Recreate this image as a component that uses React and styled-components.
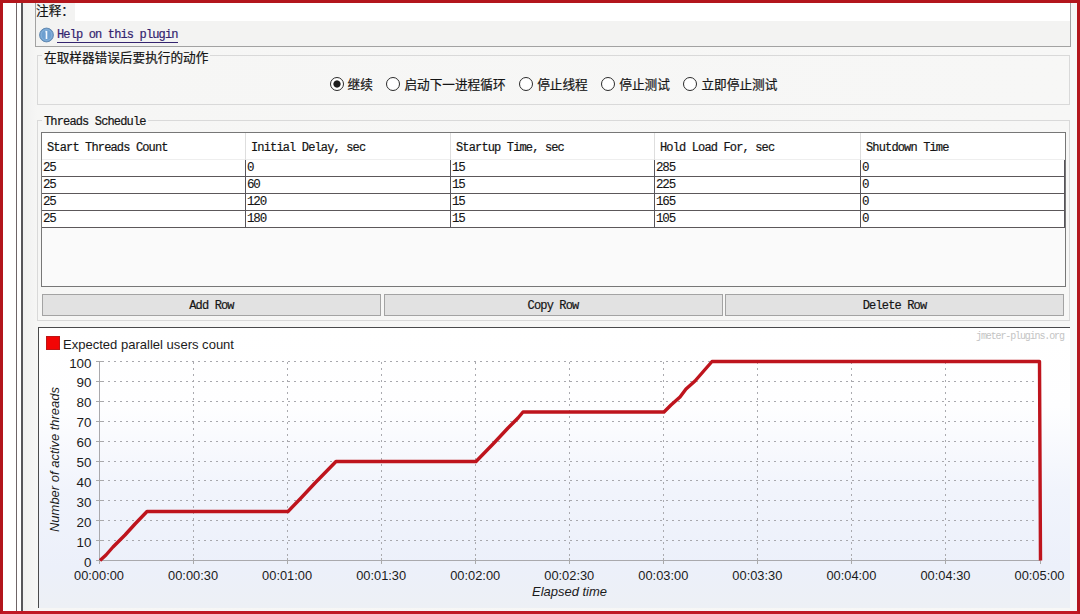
import React from "react";
import styled, { createGlobalStyle, css } from "styled-components";

const Global = createGlobalStyle`
  * { box-sizing: border-box; }
  body { margin: 0; background: #f5f5f5; overflow: hidden; }
`;

const mono = css`
  font-family: "Liberation Mono", "Noto Sans CJK SC", monospace;
  font-size: 12px;
  letter-spacing: -0.85px;
  -webkit-text-stroke: 0.2px currentColor;
  white-space: pre;
`;
const cjk = css`
  font-family: "Noto Sans CJK SC", sans-serif;
  font-size: 12.65px;
  letter-spacing: 0;
  -webkit-text-stroke: 0.2px currentColor;
  white-space: nowrap;
`;

const Frame = styled.div`
  width: 1080px;
  height: 614px;
  border: 3px solid #b3161c;
  border-bottom-color: #c01824;
  display: flex;
  background: #fff;
  color: #151515;
  overflow: hidden;
`;
const Gutter = styled.div`
  width: 15px;
  border-right: 1px solid #6f6567;
  background: #fff;
`;
const Divider = styled.div`
  width: 6px;
  border-right: 2px solid #57565a;
  background: #fff;
`;
const Panel = styled.main`
  flex: 1;
  display: flex;
  flex-direction: column;
  padding: 0 6px 0 12px;
  background: linear-gradient(90deg, #f0f0f0, #f6f6f5 14px, #f7f7f6);
`;
const Header = styled.section`
  height: 44px;
  width: 1036px;
  border: solid #a2a2a2;
  border-width: 0 1px 1px;
  background: #f3f3f2;
`;
const CommentRow = styled.div`
  display: flex;
  height: 18px;
`;
const CommentLabel = styled.label`
  ${cjk}
  width: 39px;
  font-size: 12.65px;
  line-height: 14px;
`;
const CommentField = styled.div`
  flex: 1;
  background: #fff;
`;
const HelpRow = styled.div`
  display: flex;
  align-items: center;
  gap: 3px;
  height: 25px;
  padding: 3px 0 0 3px;
`;
const InfoIcon = styled.svg`
  width: 15px;
  height: 16px;
`;
const HelpLink = styled.a`
  ${mono}
  height: 15px;
  line-height: 15px;
  color: #34246f;
  border-bottom: 1px solid #34246f;
`;
const Group = styled.fieldset`
  margin: ${(p) => p.$top}px 0 0 2px;
  padding: ${(p) => p.$pad || "0"};
  width: 1033px;
  min-width: 0;
  height: ${(p) => p.$h}px;
  border: 1px solid #d9d9d9;
`;
const Legend = styled.legend`
  ${(p) => (p.$cn ? cjk : mono)}
  height: 13px;
  line-height: ${(p) => (p.$cn ? 15 : 17)}px;
  margin-left: ${(p) => (p.$cn ? 4 : 1)}px;
  padding: 0 2px;
`;
const Options = styled.div`
  display: flex;
  justify-content: flex-start;
  gap: 13.6px;
  padding: 12px 0 0 291.5px;
`;
const Option = styled.label`
  ${cjk}
  display: flex;
  align-items: center;
  gap: 4px;
  height: 20px;
  line-height: 20px;
`;
const Radio = styled.span`
  width: 14px;
  height: 14px;
  border: 1px solid #2b2b2b;
  border-radius: 50%;
  background: ${(p) => (p.$on ? "radial-gradient(circle, #1c1c1c 3.2px, #fff 4px)" : "#fff")};
`;
const TableBox = styled.div`
  width: 1025px;
  height: 155px;
  border: 1px solid #777;
  background: #fafafa;
`;
const Row = styled.div`
  display: grid;
  grid-template-columns: 204px 205px 204px 206px 204px;
  background: #fff;
`;
const HeadRow = styled(Row)`
  height: 27px;
  border-bottom: 1px solid #eeeeee;
`;
const HeadCell = styled.div`
  ${mono}
  padding: 1px 0 0 5px;
  line-height: 28px;
  border-right: 1px solid #dedede;
  &:last-child { border-right: 0; }
`;
const DataRow = styled(Row)`
  height: 17px;
  border-bottom: 1px solid #5c585a;
`;
const Cell = styled.div`
  ${mono}
  font-size: 12.5px;
  letter-spacing: -1.15px;
  -webkit-text-stroke: 0.1px currentColor;
  line-height: 17px;
  padding-left: 1px;
  border-right: 1px solid #57545a;
`;
const Buttons = styled.div`
  display: grid;
  grid-template-columns: repeat(3, 339px);
  gap: 2.5px;
  padding: 7px 0 0 1px;
`;
const Button = styled.button`
  ${mono}
  height: 22px;
  padding: 2px 0 0;
  color: #151515;
  border: 1px solid #a3a3a3;
  border-radius: 0;
  background: #e2e2e2;
`;
const ChartBox = styled.section`
  width: 1032px;
  height: 281px;
  margin: 6px 0 0 3px;
  border: solid #4a4a4c;
  border-width: 1px 0 0 1px;
  background: linear-gradient(180deg, #fff 0%, #fefeff 28%, #f1f4fc 58%, #ecf0fa 85%, #edf0f5 100%);
`;
const Chart = styled.svg`
  display: block;
  width: 1031px;
  height: 280px;
  font-family: "Liberation Sans", Arial, sans-serif;
  font-size: 13.4px;
  fill: #1b1b1b;
`;

const options = ["继续", "启动下一进程循环", "停止线程", "停止测试", "立即停止测试"];
const columns = ["Start Threads Count", "Initial Delay, sec", "Startup Time, sec", "Hold Load For, sec", "Shutdown Time"];
const rows = [
  [25, 0, 15, 285, 0],
  [25, 60, 15, 225, 0],
  [25, 120, 15, 165, 0],
  [25, 180, 15, 105, 0],
];
const times = ["00:00:00", "00:00:30", "00:01:00", "00:01:30", "00:02:00", "00:02:30", "00:03:00", "00:03:30", "00:04:00", "00:04:30", "00:05:00"];
const xAt = (i) => 99.5 + i * 94.05;
const yAt = (v) => 560.5 - v * 1.99;

function ThreadsChart() {
  return (
    <Chart viewBox="39 328 1031 280">
      <rect x="46.5" y="336.5" width="13" height="13" fill="#f20505" stroke="#bd1515" />
      <text x="63" y="348.7" textLength="171" lengthAdjust="spacingAndGlyphs">Expected parallel users count</text>
      <text x="976" y="338.5" textLength="89" fontSize="10" fill="#c4c4c4" fontFamily="Liberation Mono">jmeter-plugins.org</text>
      {times.map((t, i) => (
        <g key={t}>
          {i > 0 && i < 10 && (
            <line x1={Math.floor(xAt(i)) + 0.5} x2={Math.floor(xAt(i)) + 0.5} y1="362" y2="560" stroke="#aaaaaf" strokeDasharray="2 4" />
          )}
          <line x1={Math.floor(xAt(i)) + 0.5} x2={Math.floor(xAt(i)) + 0.5} y1="558" y2="564" stroke="#aaa" />
          <text x={xAt(i) - 0.5} y="579.5" textAnchor="middle" textLength="50" lengthAdjust="spacingAndGlyphs">{t}</text>
        </g>
      ))}
      {Array.from({ length: 11 }, (_, i) => i * 10).map((v) => (
        <g key={v}>
          {v > 0 && (
            <line x1="102" x2="1037" y1={Math.floor(yAt(v)) + 0.5} y2={Math.floor(yAt(v)) + 0.5} stroke="#a8a8ad" strokeDasharray="2 4" />
          )}
          <line x1="96" x2="102" y1={Math.floor(yAt(v)) + 0.5} y2={Math.floor(yAt(v)) + 0.5} stroke="#aaa" />
          <text x="91.5" y={yAt(v) + 6} textAnchor="end">{v}</text>
        </g>
      ))}
      <path d="M99.5 361V560.5H1040" fill="none" stroke="#a9a9ad" />
      <path
        d="M100 560.5L106 555L113 547L125 535L135 524L147 511.5H288L301 498L315 483L336 461.5H476L494 443L508 428L518 418L523 412H664L671 405L680 397L686 389L695 381L712 361.5H1039.5L1040.5 560.5"
        fill="none" stroke="#be141d" strokeWidth="3.4" strokeLinejoin="round"
      />
      <text x="569.5" y="596" textAnchor="middle" fontStyle="italic" textLength="75" lengthAdjust="spacingAndGlyphs">Elapsed time</text>
      <text transform="translate(58.5 459.5) rotate(-90)" textAnchor="middle" fontStyle="italic" textLength="145" lengthAdjust="spacingAndGlyphs">Number of active threads</text>
    </Chart>
  );
}

export default function App() {
  return (
    <>
      <Global />
      <Frame>
        <Gutter />
        <Divider />
        <Panel>
          <Header>
            <CommentRow>
              <CommentLabel>注释：</CommentLabel>
              <CommentField />
            </CommentRow>
            <HelpRow>
              <InfoIcon viewBox="0 0 15 16">
                <circle cx="7.5" cy="8" r="6.9" fill="#6d9fd0" stroke="#648bb2" />
                <circle cx="7.5" cy="8" r="5.4" fill="none" stroke="#8db5dc" strokeWidth=".8" />
                <path d="M7.5 4v8M6.4 4.6h1.1" fill="none" stroke="#f5f9ff" strokeWidth="1.6" />
              </InfoIcon>
              <HelpLink>Help on this plugin</HelpLink>
            </HelpRow>
          </Header>
          <Group $top={2} $h={56}>
            <Legend $cn>在取样器错误后要执行的动作</Legend>
            <Options>
              {options.map((o, i) => (
                <Option key={o}>
                  <Radio $on={i === 0} />
                  {o}
                </Option>
              ))}
            </Options>
          </Group>
          <Group $top={9} $h={207} $pad="5px 0 0 3px">
            <Legend>Threads Schedule</Legend>
            <TableBox>
              <HeadRow>
                {columns.map((c) => <HeadCell key={c}>{c}</HeadCell>)}
              </HeadRow>
              {rows.map((r) => (
                <DataRow key={r[1]}>
                  {r.map((v, i) => <Cell key={i}>{v}</Cell>)}
                </DataRow>
              ))}
            </TableBox>
            <Buttons>
              <Button>Add Row</Button>
              <Button>Copy Row</Button>
              <Button>Delete Row</Button>
            </Buttons>
          </Group>
          <ChartBox>
            <ThreadsChart />
          </ChartBox>
        </Panel>
      </Frame>
    </>
  );
}
